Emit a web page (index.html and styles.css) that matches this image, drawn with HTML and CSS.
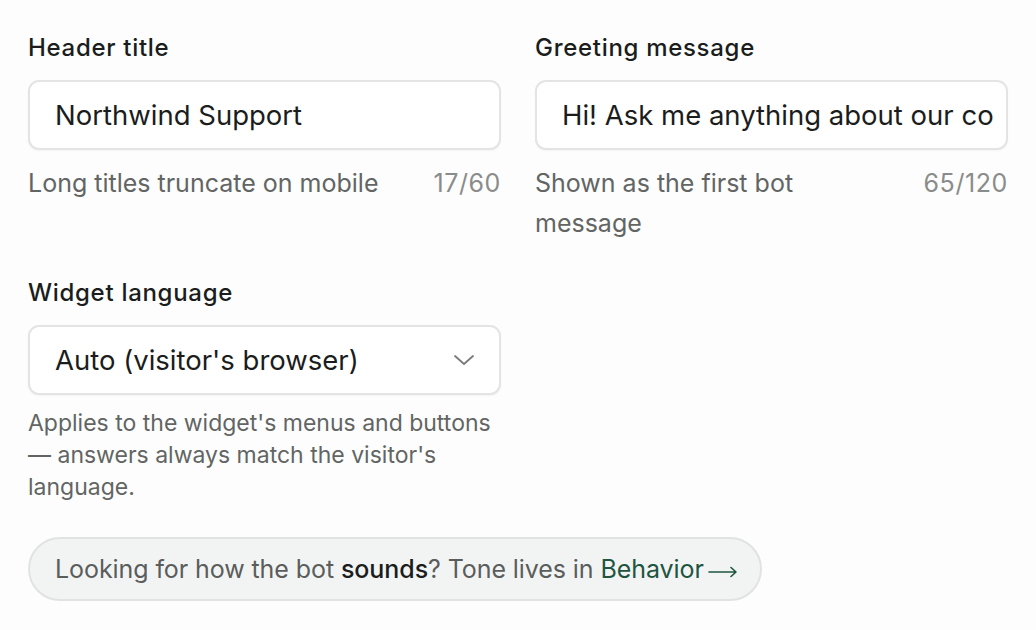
FILE: index.html
```html
<!DOCTYPE html>
<html lang="en">
<head>
<meta charset="utf-8">
<title>Widget settings</title>
<link rel="stylesheet" href="styles.css">
</head>
<body>
<main class="page">
  <div class="grid">
    <div class="field">
      <label class="label">Header title</label>
      <div class="input"><span class="value">Northwind Support</span></div>
      <div class="help-row">
        <span class="help">Long titles truncate on mobile</span>
        <span class="count">17/60</span>
      </div>
    </div>
    <div class="field">
      <label class="label">Greeting message</label>
      <div class="input"><span class="value">Hi! Ask me anything about our co</span></div>
      <div class="help-row">
        <span class="help">Shown as the first bot message</span>
        <span class="count">65/120</span>
      </div>
    </div>
    <div class="field field-lang">
      <label class="label">Widget language</label>
      <div class="input select">
        <span class="value">Auto (visitor's browser)</span>
        <svg class="chev" width="22" height="12" viewBox="0 0 22 12" fill="none"><path d="M2 2 L11 10 L20 2" stroke="#7a7c7b" stroke-width="1.8" stroke-linecap="round" stroke-linejoin="round"/></svg>
      </div>
      <p class="help help-block">Applies to the widget's menus and buttons — answers always match the visitor's language.</p>
    </div>
  </div>
  <div class="note"><span class="note-text">Looking for how the bot <strong>sounds</strong>? Tone lives in <a class="link" href="#">Behavior<svg class="arrow" width="30" height="14" viewBox="0 0 30 14" fill="none"><path d="M1 7 H28 M23 2.5 L28 7 L23 11.5" stroke="#1e5540" stroke-width="1.6" stroke-linecap="round" stroke-linejoin="round"/></svg></a></span></div>
</main>
</body>
</html>
```
FILE: styles.css
```css
* { box-sizing: border-box; }
html, body { margin: 0; padding: 0; background: #fdfdfd; }
body { font-family: Inter, "Noto Sans", sans-serif; color: #1b1d1c; }
.page { padding: 32px 28px 0 28px; }
.grid { display: grid; grid-template-columns: 473px 473px; column-gap: 34px; row-gap: 34px; }
.field { display: flex; flex-direction: column; }
.label { font-size: 24px; font-weight: 500; line-height: 32px; letter-spacing: 0.7px; color: #1b1d1c; }
.input { margin-top: 16px; height: 70px; border: 2px solid #e3e4e3; border-radius: 11px; background: #fff; display: flex; align-items: center; padding: 0 25px; overflow: hidden; white-space: nowrap; box-shadow: 0 1px 2px rgba(0,0,0,0.04); }
.value { font-size: 27.5px; color: #1b1d1c; letter-spacing: 0; }
.select { justify-content: space-between; padding-right: 24px; }
.chev { flex: none; }
.help-row { display: flex; justify-content: space-between; align-items: flex-start; margin-top: 13px; gap: 40px; }
.help { font-size: 25px; color: #626563; line-height: 40px; }
.count { font-size: 25px; color: #8a8c8b; line-height: 40px; flex: none; letter-spacing: 0.6px; }
.help-block { margin: 12px 0 0 0; line-height: 32px; font-size: 23px; }
.note { margin-top: 34px; display: inline-flex; align-items: center; height: 64px; padding: 0 22px 0 25px; border: 2px solid #e1e3e2; border-radius: 32px; background: #f2f4f3; font-size: 25px; color: #5a5d5b; letter-spacing: -0.08px; }
.note strong { font-weight: 500; color: #1b1d1c; }
.link { color: #1e5540; text-decoration: none; }
.arrow { margin-left: 4px; vertical-align: -1px; }
```
